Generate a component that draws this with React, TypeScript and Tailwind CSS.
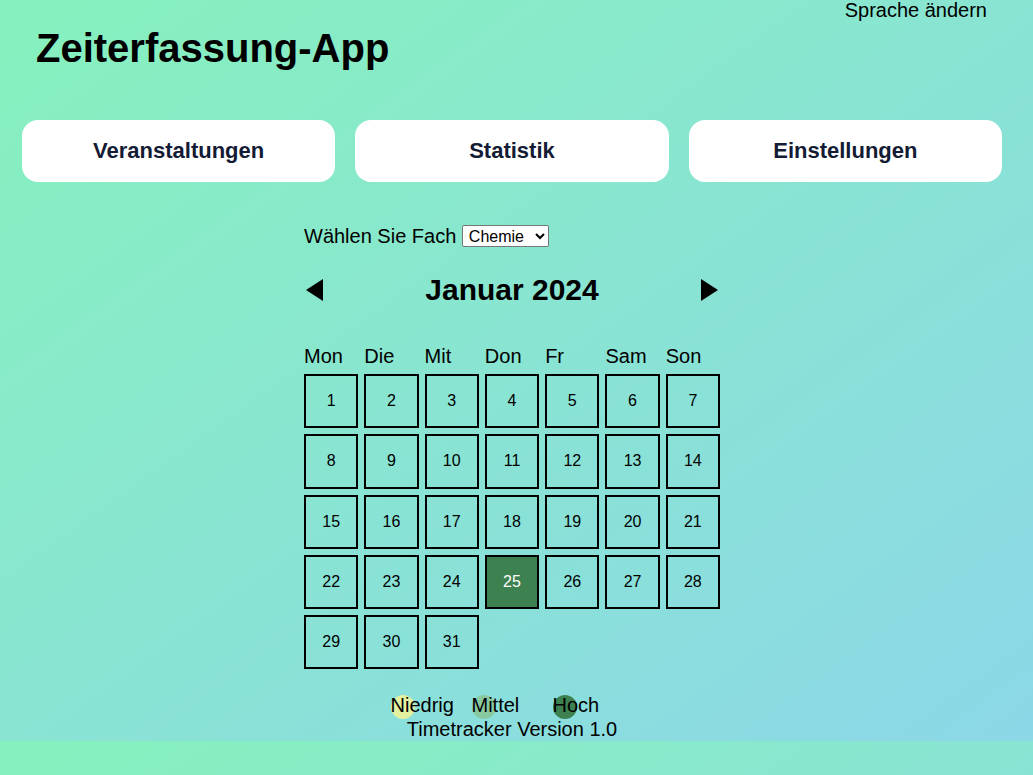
import { useState } from 'react';

const WEEKDAYS = ['Mon', 'Die', 'Mit', 'Don', 'Fr', 'Sam', 'Son'];
const NAV = ['Veranstaltungen', 'Statistik', 'Einstellungen'];
const LEGEND = [
  { label: 'Niedrig', color: 'bg-[#e2f0a0]' },
  { label: 'Mittel', color: 'bg-[#88c9a0]' },
  { label: 'Hoch', color: 'bg-[#3e8150]' },
];

function Arrow({ dir }: { dir: 'left' | 'right' }) {
  return (
    <svg width="17" height="22" viewBox="0 0 17 22" className="block">
      {dir === 'left' ? (
        <polygon points="17,0 17,22 0,11" fill="#000" />
      ) : (
        <polygon points="0,0 0,22 17,11" fill="#000" />
      )}
    </svg>
  );
}

export default function App() {
  const [subject, setSubject] = useState('Chemie');
  const selected = 25;
  const days = Array.from({ length: 31 }, (_, i) => i + 1);

  return (
    <div className="min-h-screen bg-[linear-gradient(to_bottom_right,#86f1bd,#8cd7e8)] bg-[length:100%_741px] font-['Liberation_Sans',Arial,sans-serif] text-black">
      {/* Header */}
      <div className="flex items-start justify-between">
        <h1 className="ml-[36px] mt-[25px] text-[40px] font-bold leading-[46px]">Zeiterfassung-App</h1>
        <div className="mr-[46px] text-[20px] leading-5">Sprache ändern</div>
      </div>

      {/* Navigation */}
      <div className="ml-[22px] mt-[49px] grid w-[980px] grid-cols-3 gap-5">
        {NAV.map((item) => (
          <button
            key={item}
            className="flex h-[62px] items-center justify-center rounded-2xl bg-white pb-[2px] text-[22px] font-bold text-[#141b34]"
          >
            {item}
          </button>
        ))}
      </div>

      {/* Calendar */}
      <div className="ml-[304px] mt-[42px] w-[416px]">
        <div className="flex h-[24px] items-center text-[20px] leading-[23px]">
          <span>Wählen Sie Fach&nbsp;</span>
          <select
            value={subject}
            onChange={(e) => setSubject(e.target.value)}
            className="h-[22px] w-[87px] rounded-[2px] border border-[#767676] bg-white pl-[2px] text-[16px] leading-5"
          >
            <option>Chemie</option>
            <option>Physik</option>
            <option>Biologie</option>
          </select>
        </div>

        <div className="mt-[25px] flex h-[34px] items-center justify-between px-[2px]">
          <Arrow dir="left" />
          <div className="text-[30px] font-bold leading-[34px]">Januar 2024</div>
          <Arrow dir="right" />
        </div>

        <div className="mt-[38px] grid grid-cols-7 gap-[6px]">
          {WEEKDAYS.map((d) => (
            <div key={d} className="text-[20px] leading-[23px]">
              {d}
            </div>
          ))}
          {days.map((day) => (
            <div
              key={day}
              className={`flex aspect-square items-center justify-center border-2 border-black text-[16px] ${
                day === selected ? 'bg-[#3e8150] text-white' : ''
              }`}
            >
              {day}
            </div>
          ))}
        </div>

        {/* Legend */}
        <div className="mt-[25px] flex justify-center">
          {LEGEND.map((item) => (
            <div key={item.label} className="relative w-[81px] text-[20px] leading-[23px]">
              <span className={`absolute left-0 top-[1px] h-6 w-6 rounded-full ${item.color}`} />
              <span className="relative">{item.label}</span>
            </div>
          ))}
        </div>
        <div className="mt-[1px] text-center text-[20px] leading-[23px]">Timetracker Version 1.0</div>
      </div>
    </div>
  );
}
